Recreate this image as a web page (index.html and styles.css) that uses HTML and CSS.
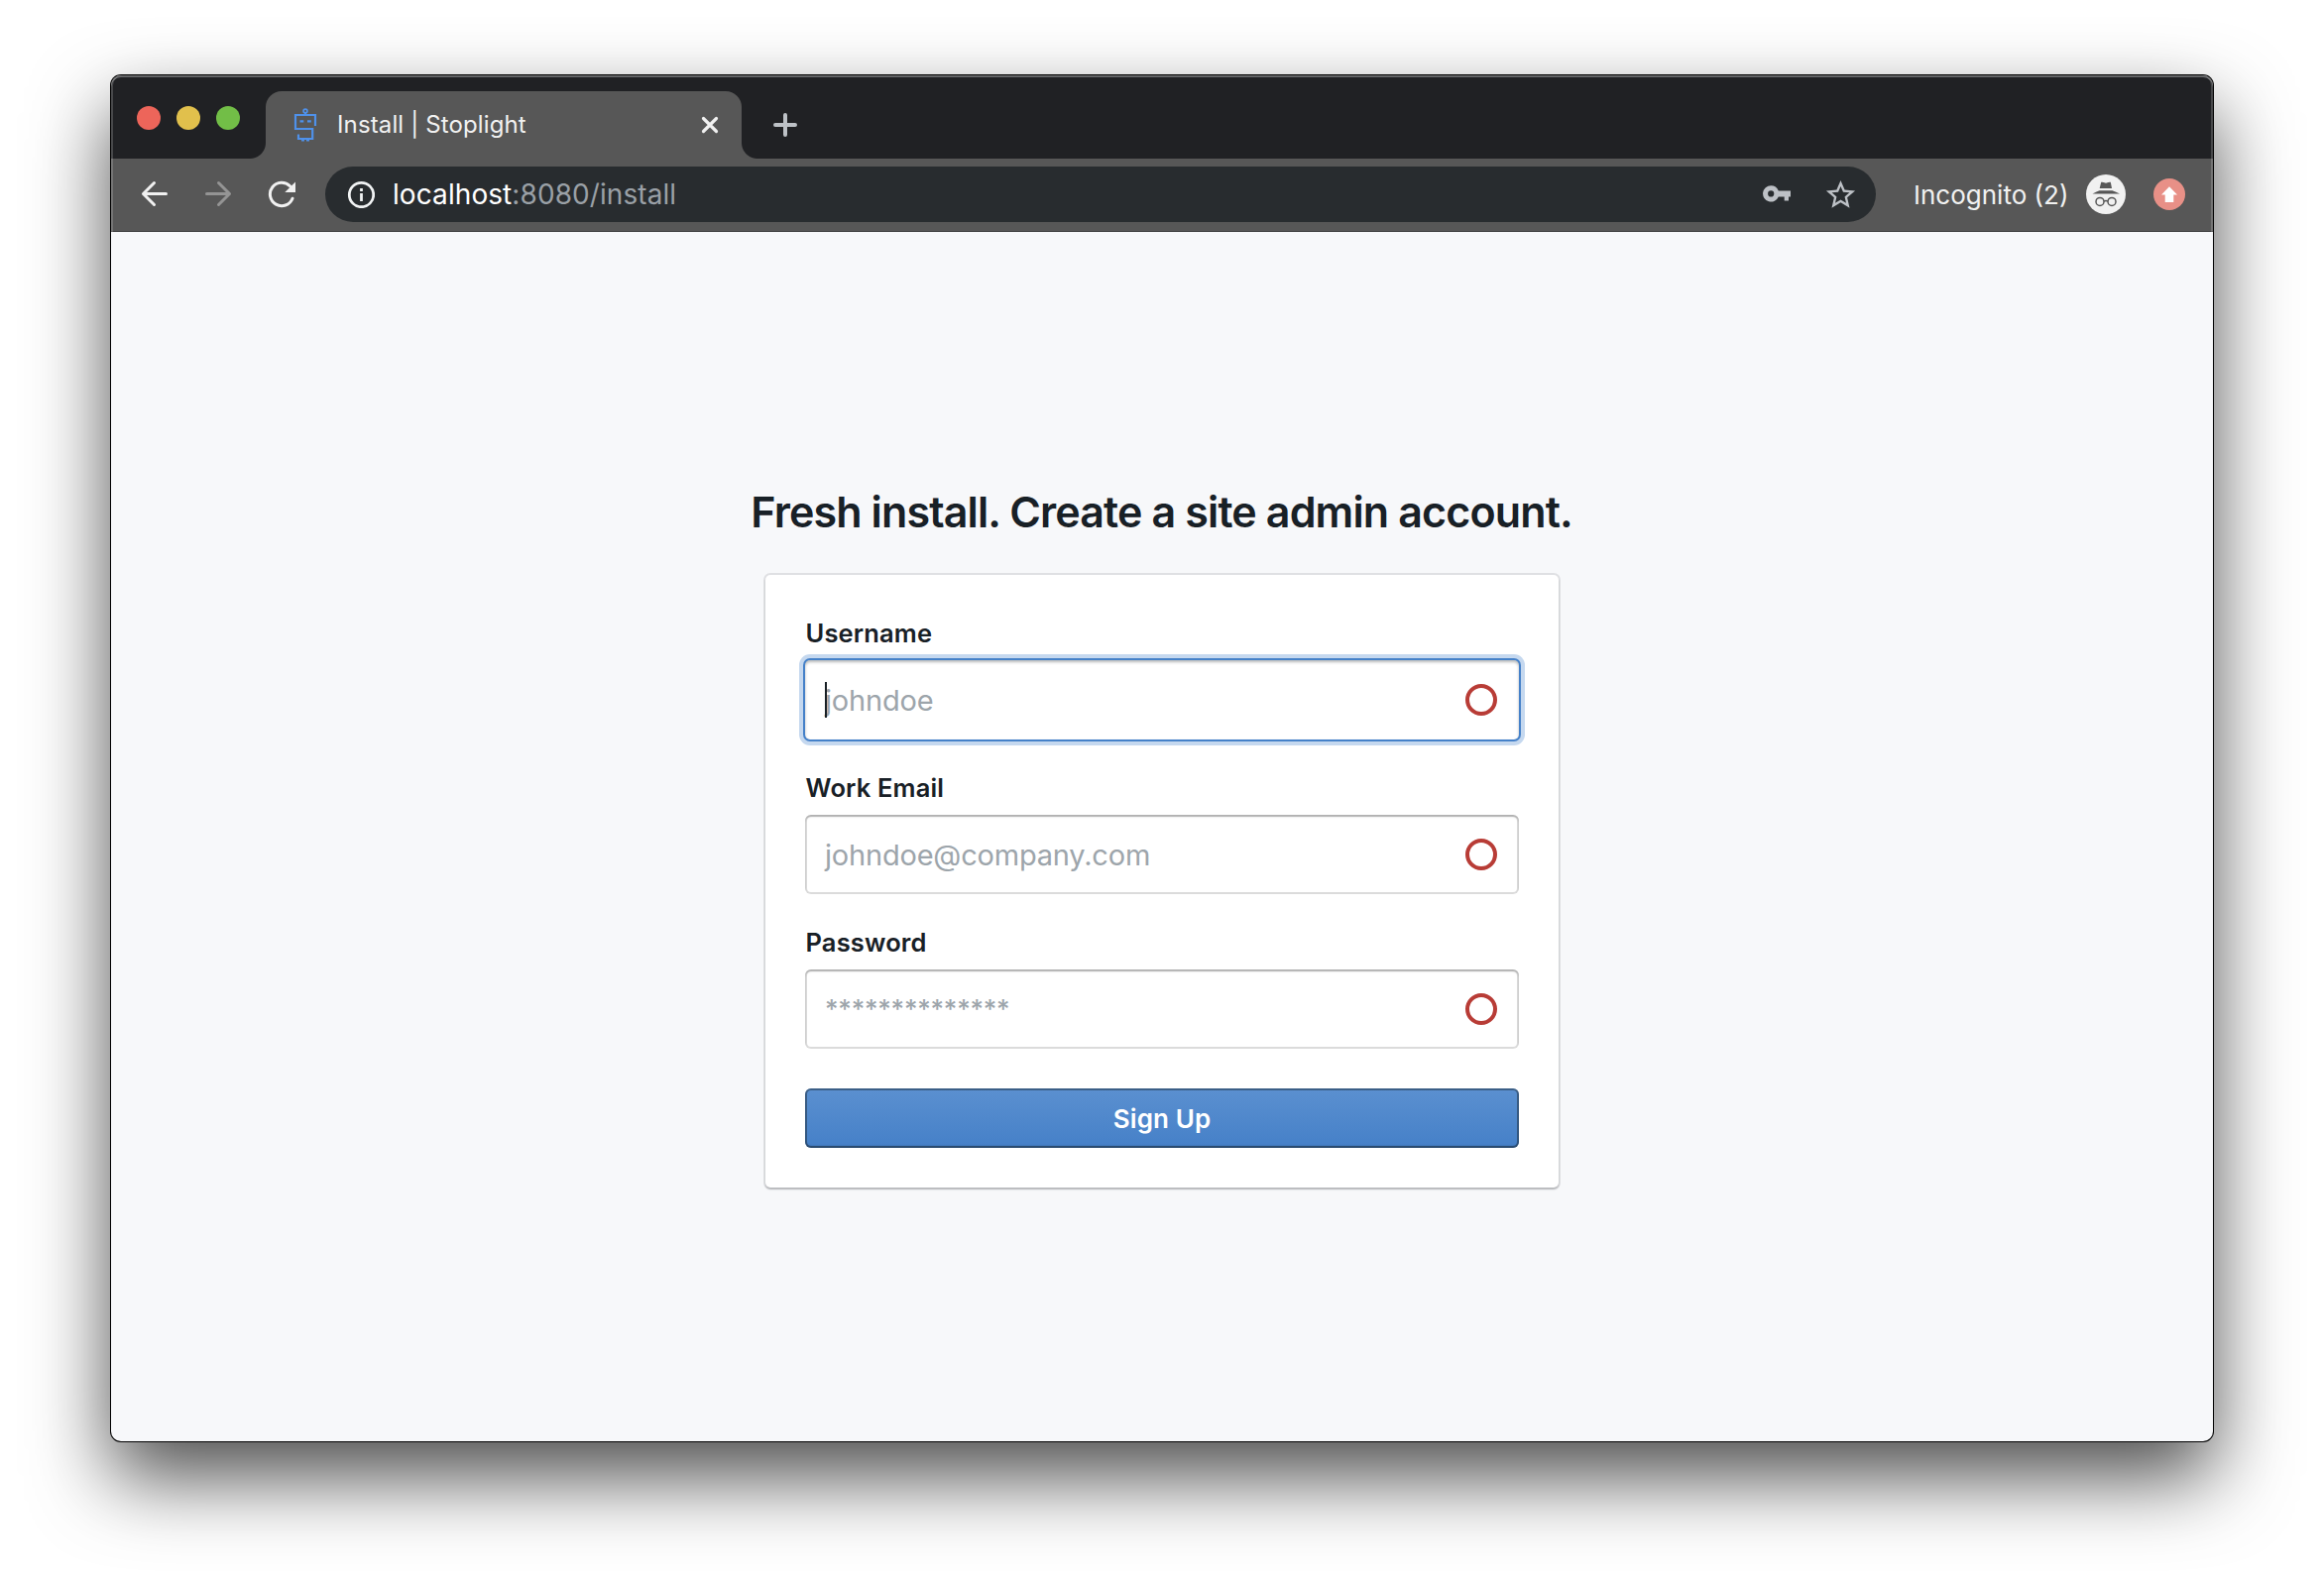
FILE: index.html
```html
<!DOCTYPE html>
<html lang="en">
<head>
<meta charset="utf-8">
<title>Install | Stoplight</title>
<link rel="stylesheet" href="styles.css">
</head>
<body>
<div class="window">
  <header class="chrome">
    <div class="tab-strip">
      <div class="lights">
        <span class="light light-close"></span>
        <span class="light light-minimize"></span>
        <span class="light light-zoom"></span>
      </div>
      <div class="tab">
        <svg class="favicon" width="24" height="34" viewBox="0 0 24 34" fill="none" stroke="#4f91ea" stroke-width="2.200">
          <circle cx="12" cy="3" r="1.900" stroke-width="1.700"/>
          <path d="M12 5v2M22 18V7H2v14h17.200v10H5v-4.500M6.500 13.300h3.800M14 13.300h3.800"/>
          <path d="M8 32.300h3M13 32.300h3"/>
        </svg>
        <span class="tab-title">Install | Stoplight</span>
        <svg class="tab-close" width="20" height="20" viewBox="0 0 20 20" fill="none" stroke="#f1f1f1" stroke-width="3.200" stroke-linecap="round"><path d="M3.500 3.500l13 13M16.500 3.500l-13 13"/></svg>
      </div>
      <svg class="new-tab" width="24" height="24" viewBox="0 0 24 24" fill="none" stroke="#bdc1c6" stroke-width="4" stroke-linecap="round"><path d="M12 2v20M2 12h20"/></svg>
    </div>
    <div class="toolbar">
      <svg class="nav" width="28" height="28" viewBox="0 0 28 28" fill="none" stroke="#f1f1f1" stroke-width="3" stroke-linecap="round" stroke-linejoin="round"><path d="M25.500 13.500h-23M13.500 2.500l-11 11 11 11"/></svg>
      <svg class="nav" width="28" height="28" viewBox="0 0 28 28" fill="none" stroke="#949494" stroke-width="3" stroke-linecap="round" stroke-linejoin="round"><path d="M2.500 13.500h23M14.500 2.500l11 11-11 11"/></svg>
      <svg class="nav" width="28" height="28" viewBox="0 0 28 28" fill="none" stroke="#f1f1f1" stroke-width="3" stroke-linecap="round"><path d="M25 18.200A11.700 11.700 0 1 1 22.500 5.800"/><path d="M28 1.500V12H17.300z" fill="#f1f1f1" stroke="none"/></svg>
      <div class="omnibox">
        <svg width="28" height="28" viewBox="0 0 28 28" fill="none" stroke="#f1f3f4" stroke-width="2.800"><circle cx="14.500" cy="14.500" r="12.200"/><path d="M14.500 13v8M14.500 8v3"/></svg>
        <span class="url">localhost<span class="url-path">:8080/install</span></span>
        <svg class="key" width="28" height="18" viewBox="0 0 28 18" fill="#bdc1c6"><path fill-rule="evenodd" d="M8.200.200a8.200 8.200 0 0 1 7.600 5.200H28v6.200h-2V15.500h-4.300v-3.900h-5.900A8.200 8.200 0 1 1 8.200.200zm0 5.100a3.100 3.100 0 1 0 0 6.200 3.100 3.100 0 0 0 0-6.200z"/></svg>
        <svg class="star" width="35" height="35" viewBox="0 0 24 24" fill="#bdc1c6"><path d="M22 9.240l-7.190-.620L12 2 9.190 8.630 2 9.240l5.460 4.730L5.820 21 12 17.270 18.180 21l-1.630-7.030L22 9.240zM12 15.400l-3.760 2.270 1-4.280-3.320-2.880 4.380-.380L12 6.100l1.710 4.040 4.380.380-3.320 2.880 1 4.280L12 15.400z"/></svg>
      </div>
      <span class="incognito">Incognito (2)</span>
      <svg class="spy" width="40" height="40" viewBox="-20 -20 40 40">
        <circle r="20" fill="#f1f1f1"/>
        <path d="M-6.300-6L-4.800-12.300Q-2.500-12.500-1.500-11.700Q0-11 1.500-11.700Q2.500-12.500 4.800-12.300L6-6z" fill="#575757"/>
        <path d="M-13.500-.500Q-9-2.800-6.500-3.700H6.500Q9-2.800 14-.500z" fill="#575757"/>
        <g fill="none" stroke="#575757" stroke-width="1.500"><circle cx="-6" cy="7.400" r="4"/><circle cx="6" cy="7.400" r="4"/><path d="M-2 7.200Q0 5.800 2 7.200"/></g>
      </svg>
      <svg class="update" width="32" height="32" viewBox="-16 -16 32 32"><circle r="16" fill="#e89087"/><path d="M0-7.800L8 .500H4.300V8H-4.300V.500H-8z" fill="#fff"/></svg>
    </div>
  </header>
  <main class="page">
    <h1 class="heading">Fresh install. Create a site admin account.</h1>
    <form class="card">
      <div class="group">
        <span class="label">Username</span>
        <div class="field field-focus"><span class="placeholder">johndoe</span><span class="ring"></span><span class="caret"></span></div>
      </div>
      <div class="group">
        <span class="label">Work Email</span>
        <div class="field"><span class="placeholder">johndoe@company.com</span><span class="ring"></span></div>
      </div>
      <div class="group">
        <span class="label">Password</span>
        <div class="field"><span class="placeholder placeholder-stars">**************</span><span class="ring"></span></div>
      </div>
      <button class="submit" type="button">Sign Up</button>
    </form>
  </main>
</div>
</body>
</html>
```
FILE: styles.css
```css
* { box-sizing: border-box; }

body {
  margin: 0;
  padding: 76px 112px 148px;
  height: 1602px;
  background: #fff;
  font-family: Inter, "Liberation Sans", sans-serif;
  overflow: hidden;
}

svg { display: block; flex: none; }

.window {
  height: 1378px;
  display: flex;
  flex-direction: column;
  border-radius: 10px;
  overflow: hidden;
  background: #f7f8fa;
  box-shadow: 0 0 0 1px #000, 0 36px 80px rgba(0, 0, 0, .7);
}

/* Browser chrome */
.chrome { position: relative; }

.chrome::after {
  content: "";
  position: absolute;
  inset: 0;
  border-radius: 10px 10px 0 0;
  box-shadow: inset 0 2px 0 rgba(255, 255, 255, .3), inset 2px 0 0 rgba(255, 255, 255, .18), inset -2px 0 0 rgba(255, 255, 255, .18);
}

.tab-strip {
  height: 84px;
  display: flex;
  align-items: flex-end;
  background: #202124;
}

.lights {
  display: flex;
  gap: 16px;
  width: 156px;
  padding: 0 0 29px 26px;
}

.light { width: 24px; height: 24px; border-radius: 50%; }
.light-close { background: #ed655a; }
.light-minimize { background: #e1c04c; }
.light-zoom { background: #72be47; }

.tab {
  position: relative;
  width: 480px;
  height: 68px;
  display: flex;
  align-items: center;
  padding: 0 22px 0 28px;
  border-radius: 16px 16px 0 0;
  background: #575757;
}

.tab::before, .tab::after {
  content: "";
  position: absolute;
  bottom: 0;
  width: 16px;
  height: 16px;
}

.tab::before { right: 100%; background: radial-gradient(circle at 0 0, transparent 15.5px, #575757 16.5px); }
.tab::after { left: 100%; background: radial-gradient(circle at 100% 0, transparent 15.5px, #575757 16.5px); }

.tab-title {
  flex: 1;
  margin-left: 20px;
  font-size: 24px;
  line-height: 30px;
  letter-spacing: .13px;
  color: #f1f1f1;
  white-space: nowrap;
}

.new-tab { margin: 0 0 22px 32px; }

.toolbar {
  height: 74px;
  display: flex;
  align-items: center;
  padding: 0 28px 1px 30px;
  background: #575757;
  border-bottom: 1px solid #403f40;
}

.nav { margin-right: 36px; }
.nav:nth-child(3) { margin-right: 30px; }

.omnibox {
  width: 1564px;
  height: 56px;
  display: flex;
  align-items: center;
  padding: 0 18.5px 0 22px;
  border-radius: 28px;
  background: #282c2f;
}

.url {
  flex: 1;
  margin-left: 18px;
  font-size: 28px;
  line-height: 36px;
  letter-spacing: .08px;
  color: #fff;
}

.url-path { color: #9aa0a6; }
.key { margin-right: 32.5px; }

.incognito {
  width: 174px;
  margin: 1px 0 0 38px;
  font-size: 26px;
  line-height: 32px;
  letter-spacing: 0;
  color: #f1f1f1;
  white-space: nowrap;
}

.update { margin-left: 28px; }

/* Install page */
.page {
  flex: 1;
  display: flex;
  flex-direction: column;
  align-items: center;
  padding-top: 257px;
}

.heading {
  margin: 0 0 39px;
  padding-right: 1px;
  font-size: 43px;
  line-height: 50px;
  font-weight: 600;
  letter-spacing: -.87px;
  color: #182026;
}

.card {
  width: 800px;
  height: 618px;
  display: flex;
  flex-direction: column;
  gap: 30px;
  padding: 40px;
  border-radius: 5px;
  background: #fff;
  box-shadow: 0 0 0 2px rgba(16, 22, 26, .1), 0 2px 2px rgba(16, 22, 26, .2);
}

.group { display: flex; flex-direction: column; gap: 9px; }

.label {
  font-size: 25.5px;
  line-height: 37px;
  font-weight: 600;
  letter-spacing: .15px;
  padding-left: .5px;
  color: #182026;
}

.field {
  position: relative;
  height: 80px;
  display: flex;
  align-items: center;
  justify-content: space-between;
  padding: 0 22px 0 20px;
  border-radius: 6px;
  background: #fff;
  box-shadow: inset 0 0 0 2px rgba(0, 0, 0, .14), inset 0 2px 2px rgba(0, 0, 0, .2);
}

.field-focus {
  border-radius: 5px;
  box-shadow: 0 0 0 2px #4581c9, 0 0 0 6px #c5d8ef, inset 0 2px 3px rgba(16, 22, 26, .3);
}

.placeholder {
  font-size: 29px;
  line-height: 40px;
  letter-spacing: -.2px;
  margin-top: 2px;
  color: #9da5ab;
}

.placeholder-stars { margin-top: 0; font-size: 26px; font-weight: 500; letter-spacing: -.22px; }

.ring {
  width: 32px;
  height: 32px;
  border: 4px solid #b83c36;
  border-radius: 50%;
}

.caret {
  position: absolute;
  left: 20px;
  top: 22px;
  width: 2px;
  height: 36px;
  background: #182026;
}

.submit {
  height: 60px;
  margin-top: 10px;
  padding: 2px 0 0;
  border: 0;
  border-radius: 6px;
  background: linear-gradient(#5b90d0, #4580c8);
  box-shadow: inset 0 0 0 2px rgba(16, 22, 26, .4), inset 0 -2px 2px rgba(16, 22, 26, .2);
  font: 600 26px/32px Inter, "Liberation Sans", sans-serif;
  letter-spacing: .1px;
  color: #fff;
}
```
